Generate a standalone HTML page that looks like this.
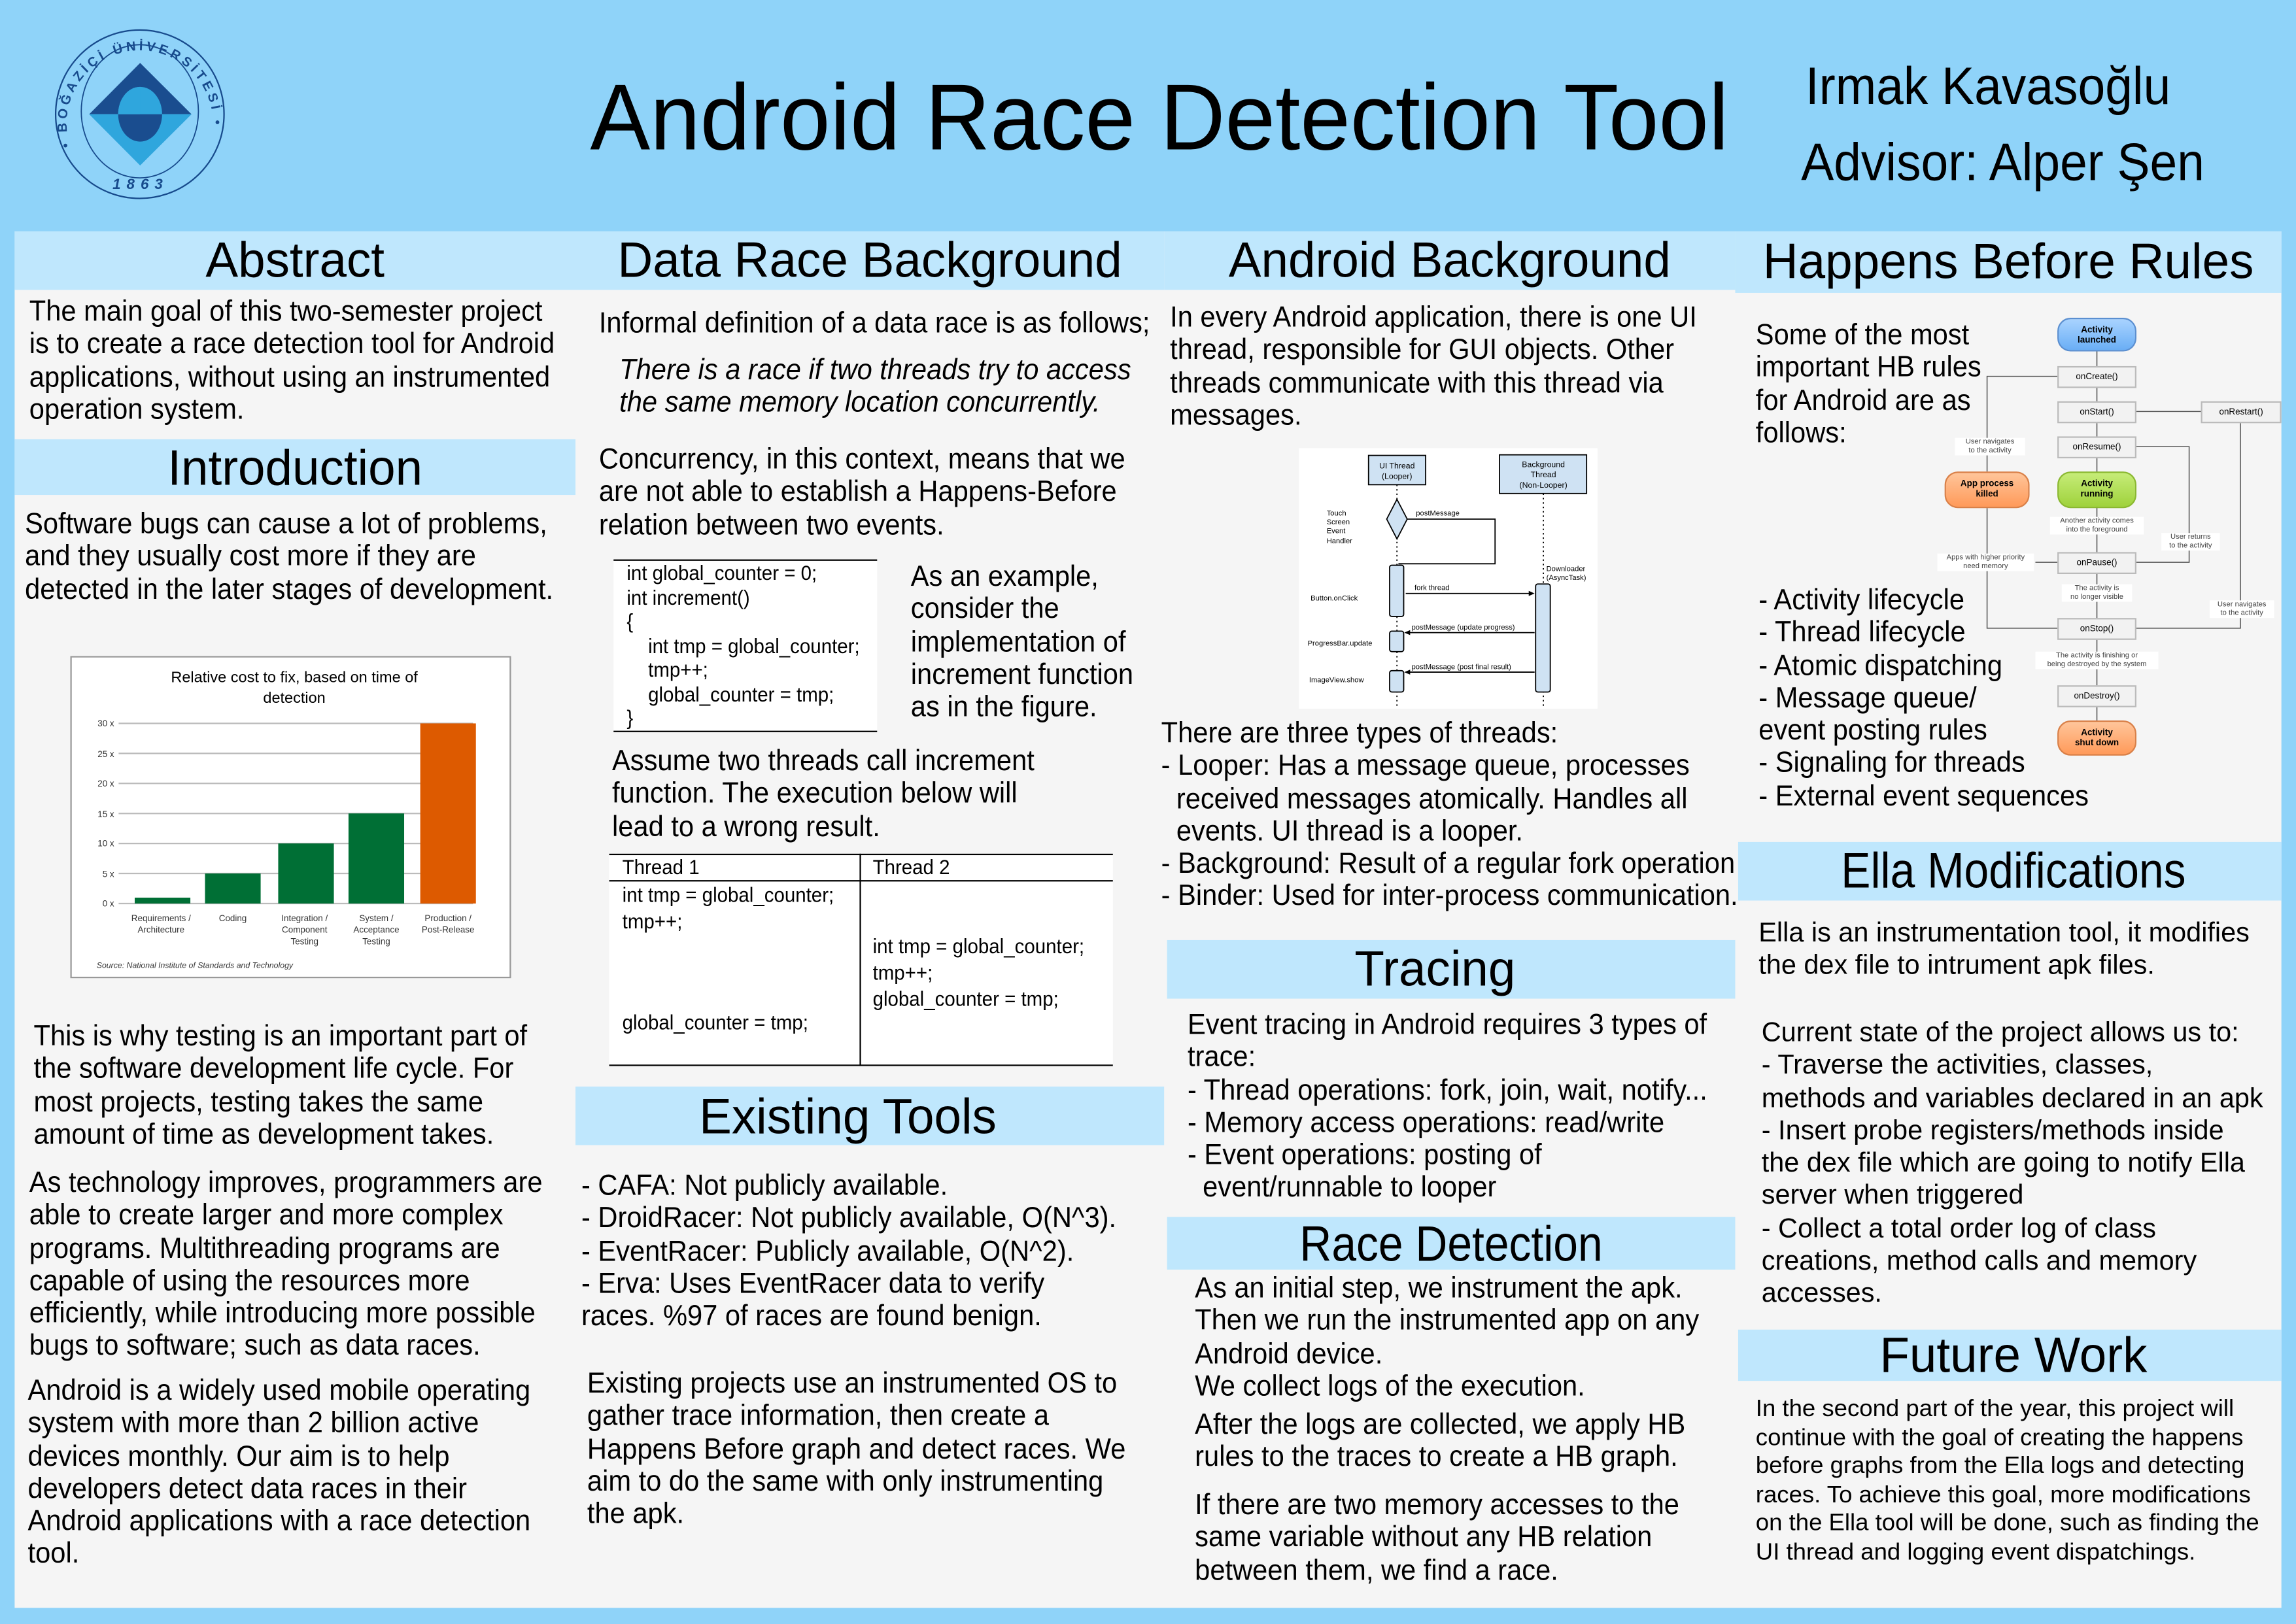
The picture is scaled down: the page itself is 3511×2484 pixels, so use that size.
<!DOCTYPE html>
<html><head><meta charset="utf-8"><style>
*{margin:0;padding:0;box-sizing:border-box}
html,body{width:3511px;height:2484px;overflow:hidden;background:#8fd3f9}
#w{position:absolute;left:0;top:0;width:1568px;height:1109px;transform:scale(2.2392,2.2398);transform-origin:0 0;font-family:"Liberation Sans",sans-serif;color:#000}
.a{position:absolute}
.p{position:absolute;background:#f5f5f5}
.h{position:absolute;background:#bfe7fd}
.t{position:absolute;font-size:20px;line-height:22.3px;white-space:nowrap;transform:scaleX(.93);transform-origin:0 0}
.hd{position:absolute;font-size:34px;line-height:40px;text-align:center;white-space:nowrap;transform:scaleX(.98);transform-origin:50% 0}
.cm{position:absolute;font-family:"Liberation Sans",sans-serif;font-size:14px;white-space:nowrap;transform:scaleX(.94);transform-origin:0 0}
.lb{position:absolute;border:1px solid #bbb;background:#f2f2f2;font-size:6px;text-align:center;line-height:14px}
.pill{position:absolute;border-radius:9px;font-size:6px;font-weight:bold;text-align:center;line-height:7px;padding-top:5px}
.nt{position:absolute;font-size:5px;line-height:6px;text-align:center;color:#444;background:#fff}
</style></head><body><div id="w">
<div class="p" style="left:10px;top:158px;width:1548px;height:940px"></div>
<div class="h" style="left:10px;top:158px;width:383px;height:40px"></div>
<div class="h" style="left:393px;top:158px;width:402px;height:40px"></div>
<div class="h" style="left:795px;top:158px;width:390px;height:40px"></div>
<div class="h" style="left:1185px;top:158px;width:373px;height:42px"></div>
<div class="h" style="left:10px;top:300px;width:383px;height:38px"></div>
<div class="h" style="left:393px;top:742px;width:402px;height:40px"></div>
<div class="h" style="left:797px;top:642px;width:388px;height:40px"></div>
<div class="h" style="left:797px;top:831px;width:388px;height:36px"></div>
<div class="h" style="left:1187px;top:575px;width:371px;height:40px"></div>
<div class="h" style="left:1187px;top:908px;width:371px;height:35px"></div>

<svg class="a" style="left:0;top:0" width="170" height="150" viewBox="0 0 170 150">
<circle cx="95.5" cy="78" r="57.5" fill="none" stroke="#174a8c" stroke-width="1"/>
<ellipse cx="95.5" cy="76" rx="40" ry="45.5" fill="none" stroke="#174a8c" stroke-width="0.8"/>
<polygon points="95.7,43 130.8,78 60.9,78" fill="#1a4d8f"/>
<polygon points="60.9,78 130.8,78 95.7,113" fill="#2fa6dd"/>
<ellipse cx="95.7" cy="78" rx="15" ry="18.7" fill="#2fa6dd"/>
<path d="M80.7,78 A15,18.7 0 0 0 110.7,78 Z" fill="#1a4d8f"/>
<path d="M95.7,59.3 A15,18.7 0 0 0 80.7,78 L95.7,78 Z" fill="#2fa6dd"/>
<path id="arc" d="M48,100 A50,50 0 1 1 143,100" fill="none"/>
<text font-size="9" fill="#174a8c" font-family="Liberation Sans" font-weight="bold" letter-spacing="2.2"><textPath href="#arc">• BOĞAZİÇİ ÜNİVERSİTESİ •</textPath></text>
<text x="96" y="129" font-size="10" fill="#174a8c" text-anchor="middle" font-family="Liberation Sans" font-style="italic" font-weight="bold" letter-spacing="4">1863</text>
</svg>

<div class="a" style="left:403px;top:40px;width:780px;font-size:64px;line-height:80px;white-space:nowrap;transform:scaleX(.96);transform-origin:0 0">Android Race Detection Tool</div>
<div class="a" style="left:1233px;top:38px;font-size:36px;line-height:42px;white-space:nowrap;transform:scaleX(.93);transform-origin:0 0">Irmak Kavasoğlu</div>
<div class="a" style="left:1230px;top:90px;font-size:36px;line-height:42px;white-space:nowrap;transform:scaleX(.93);transform-origin:0 0">Advisor: Alper Şen</div>

<div class="hd" style="left:10px;top:158px;width:383px">Abstract</div>
<div class="hd" style="left:393px;top:158px;width:402px">Data Race Background</div>
<div class="hd" style="left:795px;top:158px;width:390px">Android Background</div>
<div class="hd" style="left:1185px;top:159px;width:373px">Happens Before Rules</div>
<div class="hd" style="left:10px;top:300px;width:383px">Introduction</div>
<div class="hd" style="left:393px;top:743px;width:372px">Existing Tools</div>
<div class="hd" style="left:797px;top:642px;width:366px">Tracing</div>
<div class="hd" style="left:797px;top:830px;width:388px;transform:scaleX(.89)">Race Detection</div>
<div class="hd" style="left:1187px;top:575px;width:376px;transform:scaleX(.89)">Ella Modifications</div>
<div class="hd" style="left:1187px;top:906px;width:376px">Future Work</div>

<div class="t" style="left:20px;top:202px">The main goal of this two-semester project<br>is to create a race detection tool for Android<br>applications, without using an instrumented<br>operation system.</div>
<div class="t" style="left:17px;top:347px">Software bugs can cause a lot of problems,<br>and they usually cost more if they are<br>detected in the later stages of development.</div>
<div class="t" style="left:23px;top:697px">This is why testing is an important part of<br>the software development life cycle. For<br>most projects, testing takes the same<br>amount of time as development takes.</div>
<div class="t" style="left:20px;top:797px">As technology improves, programmers are<br>able to create larger and more complex<br>programs. Multithreading programs are<br>capable of using the resources more<br>efficiently, while introducing more possible<br>bugs to software; such as data races.</div>
<div class="t" style="left:19px;top:939px">Android is a widely used mobile operating<br>system with more than 2 billion active<br>devices monthly. Our aim is to help<br>developers detect data races in their<br>Android applications with a race detection<br>tool.</div>

<svg class="a" style="left:48px;top:448px" width="302" height="221" viewBox="0 0 302 221">
<rect x="0.5" y="0.5" width="300" height="219" fill="#fff" stroke="#999"/>
<text x="153" y="18" font-size="10.5" text-anchor="middle" font-family="Liberation Sans">Relative cost to fix, based on time of</text>
<text x="153" y="32" font-size="10.5" text-anchor="middle" font-family="Liberation Sans">detection</text>
<g stroke="#bbb" stroke-width="1">
<line x1="33" y1="46" x2="275" y2="46"/><line x1="33" y1="66.5" x2="275" y2="66.5"/><line x1="33" y1="87" x2="275" y2="87"/><line x1="33" y1="107.5" x2="275" y2="107.5"/><line x1="33" y1="128" x2="275" y2="128"/><line x1="33" y1="148.5" x2="275" y2="148.5"/><line x1="33" y1="169" x2="275" y2="169"/></g>
<g font-size="6" font-family="Liberation Sans" fill="#333" text-anchor="end">
<text x="30" y="48">30 x</text><text x="30" y="69">25 x</text><text x="30" y="89">20 x</text><text x="30" y="110">15 x</text><text x="30" y="130">10 x</text><text x="30" y="151">5 x</text><text x="30" y="171">0 x</text></g>
<rect x="44" y="165" width="38" height="4" fill="#006f35"/>
<rect x="92" y="148.5" width="38" height="20.5" fill="#006f35"/>
<rect x="142" y="128" width="38" height="41" fill="#006f35"/>
<rect x="190" y="107.5" width="38" height="61.5" fill="#006f35"/>
<rect x="239" y="46" width="38" height="123" fill="#dd5a00"/>
<g font-size="6" font-family="Liberation Sans" fill="#333" text-anchor="middle">
<text x="62" y="181">Requirements /</text><text x="62" y="189">Architecture</text>
<text x="111" y="181">Coding</text>
<text x="160" y="181">Integration /</text><text x="160" y="189">Component</text><text x="160" y="197">Testing</text>
<text x="209" y="181">System /</text><text x="209" y="189">Acceptance</text><text x="209" y="197">Testing</text>
<text x="258" y="181">Production /</text><text x="258" y="189">Post-Release</text></g>
<text x="18" y="213" font-size="5.5" font-style="italic" font-family="Liberation Sans" fill="#333">Source: National Institute of Standards and Technology</text>
</svg>

<div class="t" style="left:409px;top:210px">Informal definition of a data race is as follows;</div>
<div class="t" style="left:423px;top:242px;font-style:italic">There is a race if two threads try to access<br>the same memory location concurrently.</div>
<div class="t" style="left:409px;top:303px">Concurrency, in this context, means that we<br>are not able to establish a Happens-Before<br>relation between two events.</div>
<div class="a" style="left:419px;top:382px;width:180px;height:118px;background:#fff;border-top:1px solid #000;border-bottom:1px solid #000"></div>
<div class="cm" style="left:428px;top:383px;line-height:16.5px">int global_counter = 0;<br>int increment()<br>{<br>&nbsp;&nbsp;&nbsp;&nbsp;int tmp = global_counter;<br>&nbsp;&nbsp;&nbsp;&nbsp;tmp++;<br>&nbsp;&nbsp;&nbsp;&nbsp;global_counter = tmp;<br>}</div>
<div class="t" style="left:622px;top:383px">As an example,<br>consider the<br>implementation of<br>increment function<br>as in the figure.</div>
<div class="t" style="left:418px;top:509px">Assume two threads call increment<br>function. The execution below will<br>lead to a wrong result.</div>
<div class="a" style="left:416px;top:583px;width:344px;height:145px;background:#fff;border-top:1px solid #000;border-bottom:1px solid #000"></div>
<div class="a" style="left:416px;top:601px;width:344px;border-top:1px solid #000"></div>
<div class="a" style="left:587px;top:583px;height:145px;border-left:1px solid #000"></div>
<div class="cm" style="left:425px;top:584px">Thread 1</div>
<div class="cm" style="left:596px;top:584px">Thread 2</div>
<div class="cm" style="left:425px;top:602px;line-height:18px">int tmp = global_counter;<br>tmp++;</div>
<div class="cm" style="left:596px;top:637px;line-height:18px">int tmp = global_counter;<br>tmp++;<br>global_counter = tmp;</div>
<div class="cm" style="left:425px;top:690px">global_counter = tmp;</div>
<div class="t" style="left:397px;top:799px">- CAFA: Not publicly available.<br>- DroidRacer: Not publicly available, O(N^3).<br>- EventRacer: Publicly available, O(N^2).<br>- Erva: Uses EventRacer data to verify<br>races. %97 of races are found benign.</div>
<div class="t" style="left:401px;top:934px">Existing projects use an instrumented OS to<br>gather trace information, then create a<br>Happens Before graph and detect races. We<br>aim to do the same with only instrumenting<br>the apk.</div>

<div class="t" style="left:799px;top:206px">In every Android application, there is one UI<br>thread, responsible for GUI objects. Other<br>threads communicate with this thread via<br>messages.</div>
<svg class="a" style="left:887px;top:306px" width="204" height="178" viewBox="887 306 204 178">
<rect x="887" y="306" width="204" height="178" fill="#fff"/>
<g stroke="#000" stroke-width="0.8" fill="#cfe2f3">
<rect x="934.6" y="311" width="39" height="20"/>
<rect x="1024" y="310.6" width="59.5" height="26.4"/>
<line x1="954" y1="331" x2="954" y2="483" stroke-dasharray="1,2" fill="none"/>
<line x1="1054" y1="337" x2="1054" y2="483" stroke-dasharray="1,2" fill="none"/>
<polygon points="954,341 961,354.5 954,368 947,354.5"/>
<polyline points="961,354.5 1021,354.5 1021,385 955,385" fill="none"/>
<rect x="949" y="386" width="9.6" height="35" rx="1.5"/>
<rect x="1048.7" y="398.8" width="10" height="73.8" rx="1.5"/>
<rect x="949" y="431" width="9.6" height="14" rx="1.5"/>
<rect x="949" y="458" width="9.6" height="14.6" rx="1.5"/>
<line x1="960" y1="405.3" x2="1046" y2="405.3"/>
<line x1="960" y1="432" x2="1048" y2="432"/>
<line x1="960" y1="459" x2="1048" y2="459"/>
</g>
<g fill="#000"><polygon points="1048,405.3 1044,403.5 1044,407"/><polygon points="959,432 963,430.3 963,433.7"/><polygon points="959,459 963,457.3 963,460.7"/></g>
<g font-size="5.5" font-family="Liberation Sans" text-anchor="middle">
<text x="954" y="320">UI Thread</text><text x="954" y="327">(Looper)</text>
<text x="1054" y="319">Background</text><text x="1054" y="326">Thread</text><text x="1054" y="333">(Non-Looper)</text></g>
<g font-size="5" font-family="Liberation Sans">
<text x="906" y="352">Touch</text><text x="906" y="358">Screen</text><text x="906" y="364">Event</text><text x="906" y="371">Handler</text>
<text x="895" y="410">Button.onClick</text><text x="893" y="441">ProgressBar.update</text><text x="894" y="466">ImageView.show</text>
<text x="967" y="352">postMessage</text><text x="966" y="403">fork thread</text>
<text x="964" y="430">postMessage (update progress)</text><text x="964" y="457">postMessage (post final result)</text>
<text x="1056" y="390">Downloader</text><text x="1056" y="396">(AsyncTask)</text></g>
</svg>
<div class="t" style="left:793px;top:490px">There are three types of threads:<br>- Looper: Has a message queue, processes<br>&nbsp;&nbsp;received messages atomically. Handles all<br>&nbsp;&nbsp;events. UI thread is a looper.<br>- Background: Result of a regular fork operation<br>- Binder: Used for inter-process communication.</div>
<div class="t" style="left:811px;top:689px">Event tracing in Android requires 3 types of<br>trace:<br>- Thread operations: fork, join, wait, notify...<br>- Memory access operations: read/write<br>- Event operations: posting of<br>&nbsp;&nbsp;event/runnable to looper</div>
<div class="t" style="left:816px;top:869px">As an initial step, we instrument the apk.<br>Then we run the instrumented app on any<br>Android device.<br>We collect logs of the execution.</div>
<div class="t" style="left:816px;top:962px">After the logs are collected, we apply HB<br>rules to the traces to create a HB graph.</div>
<div class="t" style="left:816px;top:1017px">If there are two memory accesses to the<br>same variable without any HB relation<br>between them, we find a race.</div>

<div class="t" style="left:1199px;top:218px">Some of the most<br>important HB rules<br>for Android are as<br>follows:</div>
<div class="t" style="left:1201px;top:399px">- Activity lifecycle<br>- Thread lifecycle<br>- Atomic dispatching<br>- Message queue/<br>event posting rules<br>- Signaling for threads<br>- External event sequences</div>

<svg class="a" style="left:1320px;top:210px" width="240" height="315" viewBox="1320 210 240 315">
<g stroke="#555" stroke-width="0.7" fill="none">
<line x1="1432" y1="240" x2="1432" y2="492"/>
<polyline points="1357,322 1357,257 1405,257"/>
<polyline points="1405,429 1357,429 1357,347"/>
<polyline points="1459,281 1503,281"/>
<polyline points="1459,429 1530,429 1530,288"/>
<polyline points="1459,384 1495,384 1495,305 1459,305"/>
<line x1="1390" y1="384" x2="1405" y2="384"/>
</g>
</svg>
<div class="pill" style="left:1405px;top:217px;width:54px;height:23px;background:linear-gradient(#a9d3ff,#6aaef5);border:1px solid #5b8fd0">Activity<br>launched</div>
<div class="lb" style="left:1405px;top:250px;width:54px;height:15px">onCreate()</div>
<div class="lb" style="left:1405px;top:274px;width:54px;height:15px">onStart()</div>
<div class="lb" style="left:1503px;top:274px;width:55px;height:15px">onRestart()</div>
<div class="lb" style="left:1405px;top:298px;width:54px;height:15px">onResume()</div>
<div class="pill" style="left:1405px;top:322px;width:54px;height:25px;background:linear-gradient(#c6ec78,#9fd23c);border:1px solid #8ab830">Activity<br>running</div>
<div class="pill" style="left:1328px;top:322px;width:58px;height:25px;background:linear-gradient(#ffc59a,#ff9a5a);border:1px solid #d98048">App process<br>killed</div>
<div class="lb" style="left:1405px;top:377px;width:54px;height:15px">onPause()</div>
<div class="lb" style="left:1405px;top:422px;width:54px;height:15px">onStop()</div>
<div class="lb" style="left:1405px;top:468px;width:54px;height:15px">onDestroy()</div>
<div class="pill" style="left:1405px;top:492px;width:54px;height:24px;background:linear-gradient(#ffc59a,#ff9a5a);border:1px solid #d98048">Activity<br>shut down</div>
<div class="nt" style="left:1335px;top:299px;width:48px">User navigates<br>to the activity</div>
<div class="nt" style="left:1400px;top:353px;width:64px">Another activity comes<br>into the foreground</div>
<div class="nt" style="left:1323px;top:378px;width:66px">Apps with higher priority<br>need memory</div>
<div class="nt" style="left:1476px;top:364px;width:40px">User returns<br>to the activity</div>
<div class="nt" style="left:1408px;top:399px;width:48px">The activity is<br>no longer visible</div>
<div class="nt" style="left:1509px;top:410px;width:44px">User navigates<br>to the activity</div>
<div class="nt" style="left:1390px;top:445px;width:84px">The activity is finishing or<br>being destroyed by the system</div>

<div class="t" style="left:1201px;top:626px;font-size:18.5px;transform:scaleX(1)">Ella is an instrumentation tool, it modifies<br>the dex file to intrument apk files.</div>
<div class="t" style="left:1203px;top:694px;font-size:18.5px;transform:scaleX(1)">Current state of the project allows us to:<br>- Traverse the activities, classes,<br>methods and variables declared in an apk<br>- Insert probe registers/methods inside<br>the dex file which are going to notify Ella<br>server when triggered<br>- Collect a total order log of class<br>creations, method calls and memory<br>accesses.</div>
<div class="t" style="left:1199px;top:953px;font-size:16px;line-height:19.6px;transform:scaleX(1.02)">In the second part of the year, this project will<br>continue with the goal of creating the happens<br>before graphs from the Ella logs and detecting<br>races. To achieve this goal, more modifications<br>on the Ella tool will be done, such as finding the<br>UI thread and logging event dispatchings.</div>
</div></body></html>
